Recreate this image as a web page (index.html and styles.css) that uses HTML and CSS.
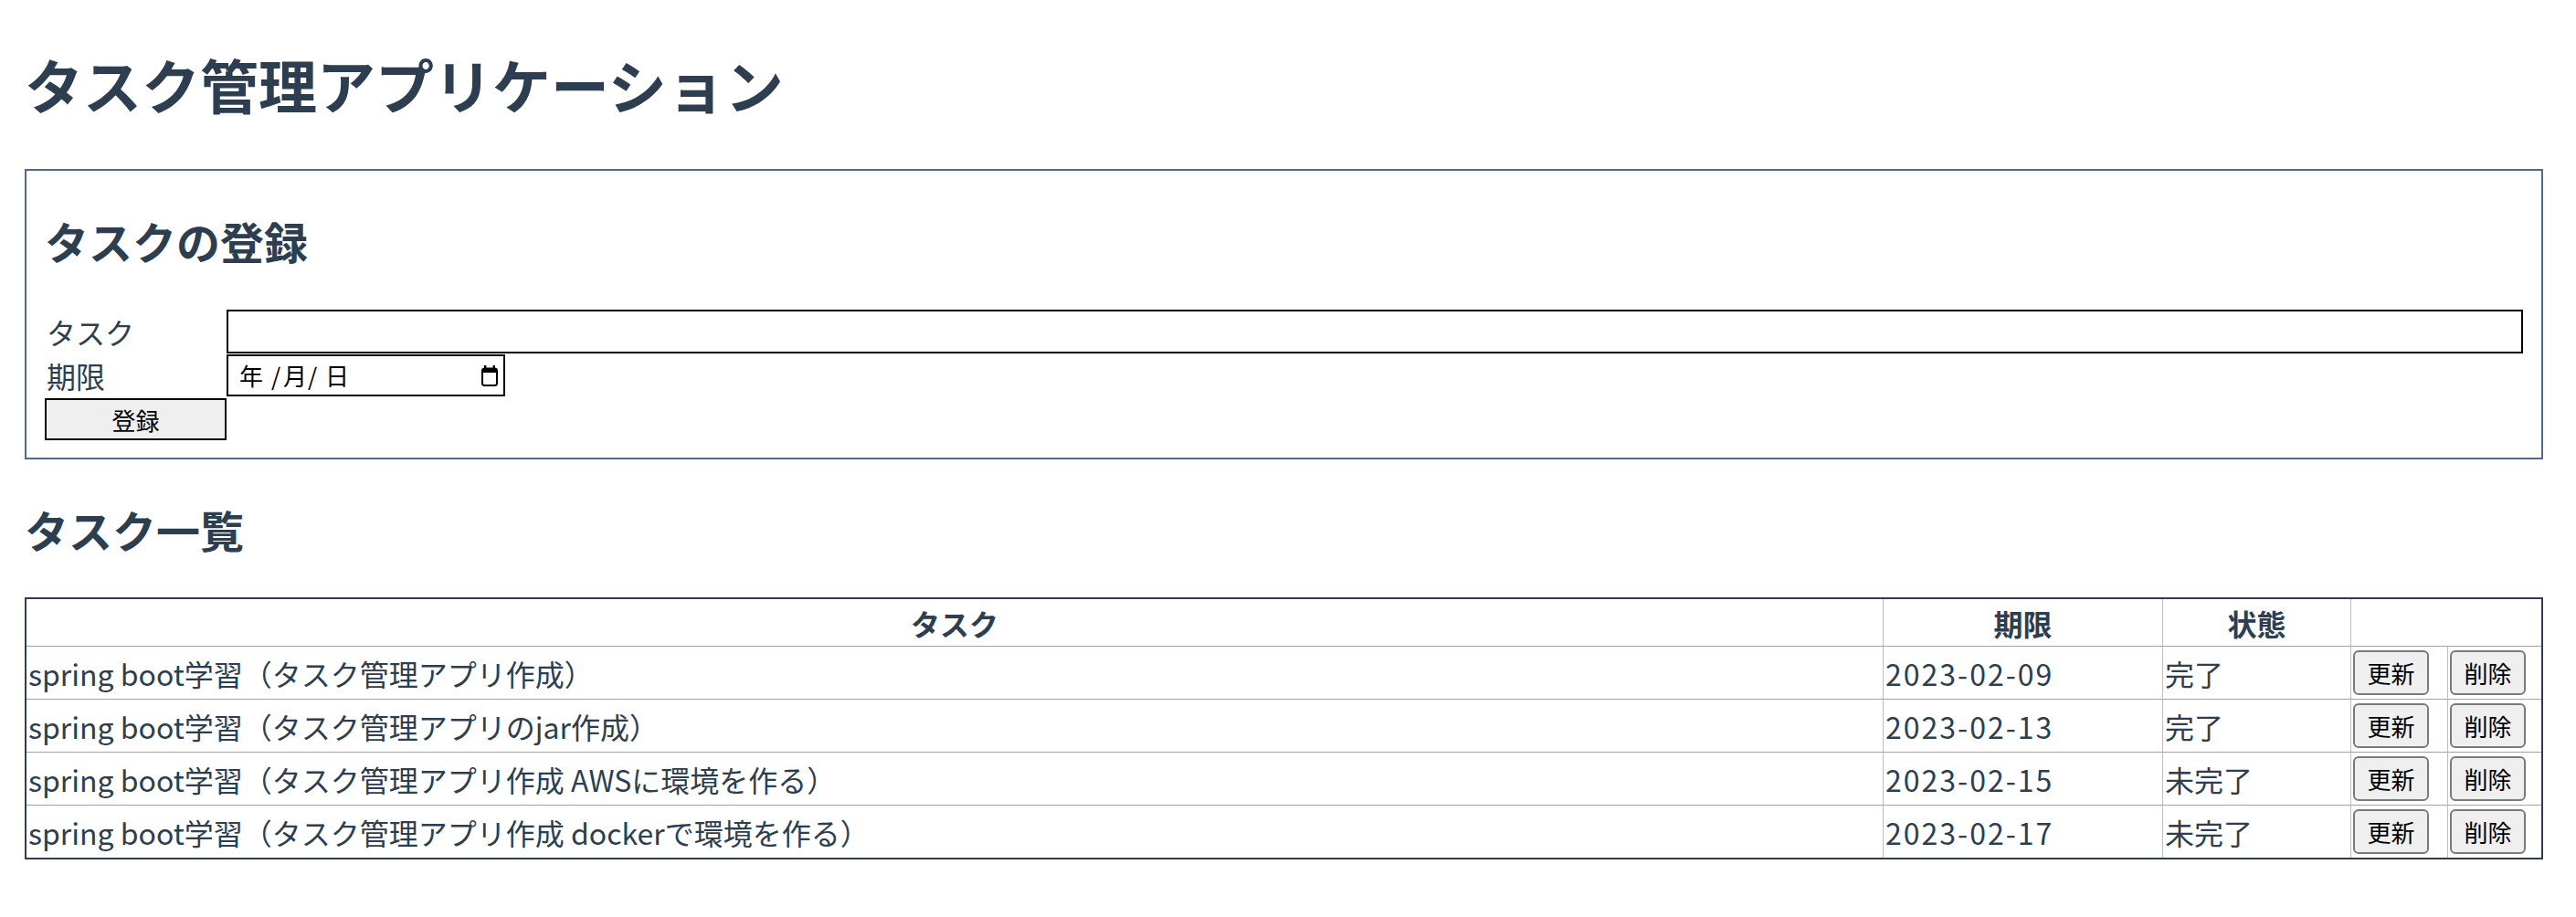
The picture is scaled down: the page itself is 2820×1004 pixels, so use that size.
FILE: index.html
```html
<!DOCTYPE html>
<html lang="ja">
<head>
<meta charset="utf-8">
<title>タスク管理アプリケーション</title>
<link rel="stylesheet" href="styles.css">
</head>
<body>
<h1 class="page-title">タスク管理アプリケーション</h1>

<section class="register">
  <h2 class="section-title">タスクの登録</h2>
  <form class="register-form">
    <label class="field-label" for="task">タスク</label>
    <input id="task" class="text-field" type="text">
    <label class="field-label">期限</label>
    <div class="date-field">
      <span class="date-text"><span class="d-year">年</span><span class="d-sep">/</span><span class="d-month">月</span><span class="d-sep d-sep-last">/</span><span class="d-day">日</span></span>
      <svg class="cal-icon" width="18" height="23" viewBox="0 0 18 23" aria-hidden="true">
        <rect x="3" y="0" width="2.4" height="5" fill="#000"/>
        <rect x="12.6" y="0" width="2.4" height="5" fill="#000"/>
        <rect x="1" y="3.5" width="16" height="18.5" rx="2.5" fill="none" stroke="#000" stroke-width="2"/>
        <rect x="1" y="3.5" width="16" height="4.5" rx="1.5" fill="#000"/>
      </svg>
    </div>
    <button class="submit-btn" type="button">登録</button>
  </form>
</section>

<h2 class="section-title list-title">タスク一覧</h2>

<table class="task-table">
  <colgroup>
    <col>
    <col class="col-due">
    <col class="col-state">
    <col class="col-act">
    <col class="col-act2">
  </colgroup>
  <thead>
    <tr>
      <th>タスク</th>
      <th>期限</th>
      <th>状態</th>
      <th colspan="2"></th>
    </tr>
  </thead>
  <tbody>
    <tr>
      <td>spring boot学習（タスク管理アプリ作成）</td>
      <td class="due">2023-02-09</td>
      <td>完了</td>
      <td><button class="row-btn" type="button">更新</button></td>
      <td><button class="row-btn" type="button">削除</button></td>
    </tr>
    <tr>
      <td>spring boot学習（タスク管理アプリのjar作成）</td>
      <td class="due">2023-02-13</td>
      <td>完了</td>
      <td><button class="row-btn" type="button">更新</button></td>
      <td><button class="row-btn" type="button">削除</button></td>
    </tr>
    <tr>
      <td>spring boot学習（タスク管理アプリ作成 AWSに環境を作る）</td>
      <td class="due">2023-02-15</td>
      <td>未完了</td>
      <td><button class="row-btn" type="button">更新</button></td>
      <td><button class="row-btn" type="button">削除</button></td>
    </tr>
    <tr>
      <td>spring boot学習（タスク管理アプリ作成 dockerで環境を作る）</td>
      <td class="due">2023-02-17</td>
      <td>未完了</td>
      <td><button class="row-btn" type="button">更新</button></td>
      <td><button class="row-btn" type="button">削除</button></td>
    </tr>
  </tbody>
</table>
</body>
</html>
```

FILE: styles.css
```css
html {
  background: #ffffff;
}

body {
  margin: 0;
  padding: 0 36px 0 27px;
  font-family: "Noto Sans CJK JP", "Noto Sans", sans-serif;
  font-size: 32px;
  color: #2c3e50;
}

.page-title {
  margin: 43px 0 46px;
  font-size: 64px;
  line-height: 96px;
  font-weight: 700;
}

.section-title {
  margin: 40px 0;
  font-size: 48px;
  line-height: 72px;
  font-weight: 700;
}

.list-title {
  margin-bottom: 39px;
}

.register {
  border: 2px solid #51698f;
  padding: 0 20px 19px;
}

.register-form {
  display: grid;
  grid-template-columns: 199px 1fr;
  row-gap: 1px;
  align-items: center;
}

.field-label {
  font-size: 32px;
  line-height: 46px;
  padding-left: 2px;
}

.text-field {
  box-sizing: border-box;
  width: 100%;
  height: 48px;
  margin: 0;
  padding: 0 6px;
  border: 2px solid #000;
  border-radius: 0;
  font: inherit;
  color: #000;
  background: #fff;
  outline: none;
}

.date-field {
  justify-self: start;
  box-sizing: border-box;
  width: 305px;
  height: 46px;
  border: 2px solid #000;
  padding: 0 6px 0 12px;
  display: flex;
  align-items: center;
  justify-content: space-between;
  color: #000;
  font-size: 26px;
  line-height: 30px;
  background: #fff;
}

.date-text {
  display: flex;
  align-items: center;
}

.d-year {
  width: 35px;
}

.d-sep {
  width: 13px;
  text-align: left;
}

.d-month {
  width: 27px;
}

.d-sep-last {
  width: 19px;
}

.cal-icon {
  display: block;
}

.submit-btn {
  grid-column: 1;
  box-sizing: border-box;
  width: 199px;
  height: 46px;
  margin: 1px 0 0;
  padding: 0;
  border: 2px solid #000;
  border-radius: 0;
  background: #efefef;
  font-family: inherit;
  font-size: 26px;
  color: #000;
}

.task-table {
  width: 100%;
  table-layout: fixed;
  border-collapse: separate;
  border-spacing: 0;
  border: 2px solid #2c3e50;
}

.col-due {
  width: 306px;
}

.col-state {
  width: 206px;
}

.col-act {
  width: 106px;
}

.col-act2 {
  width: 103px;
}

.task-table th,
.task-table td {
  padding: 0 2px;
  line-height: 46px;
  white-space: nowrap;
}

.task-table th {
  font-weight: 700;
  text-align: center;
}

.task-table thead tr {
  height: 51px;
}

.task-table tbody tr {
  height: 58px;
}

.task-table td {
  border-top: 1px solid #a3a3a3;
  text-align: left;
}

.task-table th + th,
.task-table td + td {
  border-left: 1px solid #bdbdbd;
}

.task-table .due {
  letter-spacing: 2px;
}

.row-btn {
  display: block;
  box-sizing: border-box;
  width: 83px;
  height: 49px;
  margin: 0;
  padding: 0;
  border: 2px solid #7a7a7a;
  border-radius: 6px;
  background: #efefef;
  font-family: inherit;
  font-size: 26px;
  line-height: 30px;
  color: #000;
}
```
